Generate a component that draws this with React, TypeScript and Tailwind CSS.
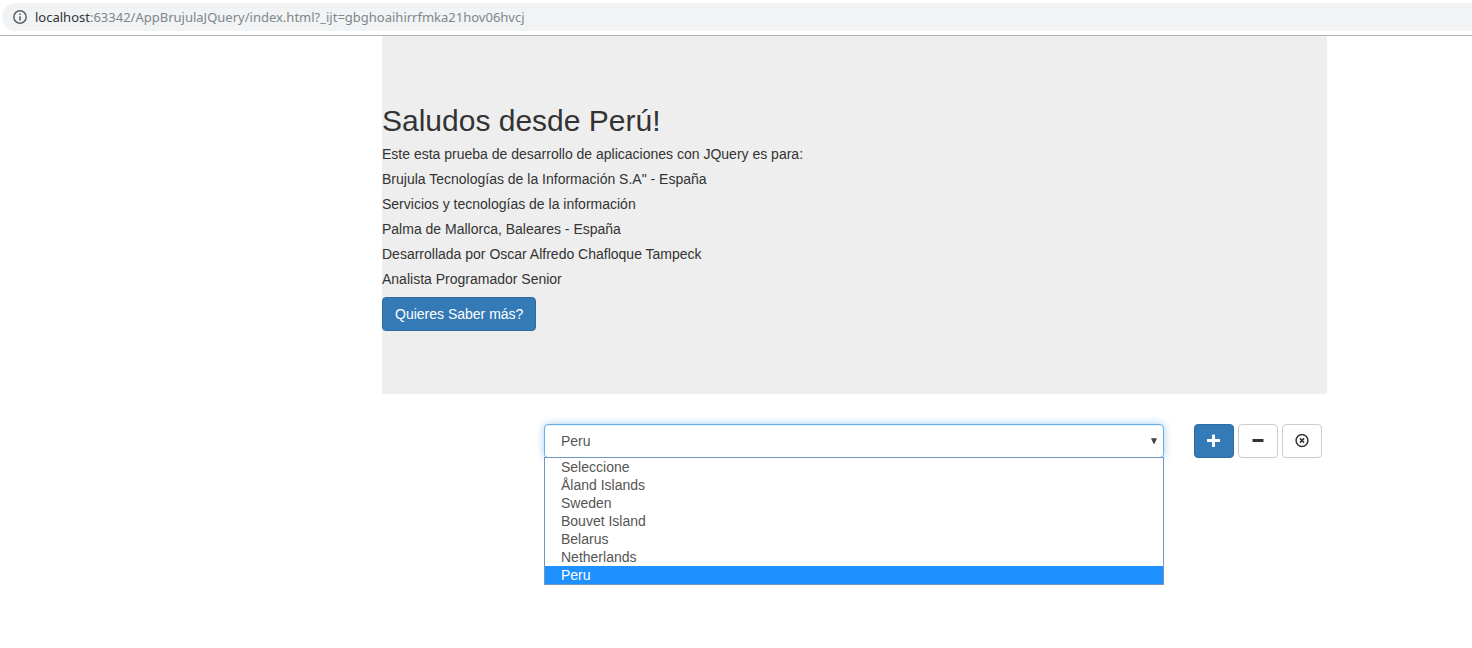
import { useState } from "react";

const countries = [
  "Seleccione",
  "Åland Islands",
  "Sweden",
  "Bouvet Island",
  "Belarus",
  "Netherlands",
  "Peru",
];

const lines = [
  "Este esta prueba de desarrollo de aplicaciones con JQuery es para:",
  'Brujula Tecnologías de la Información S.A" - España',
  "Servicios y tecnologías de la información",
  "Palma de Mallorca, Baleares - España",
  "Desarrollada por Oscar Alfredo Chafloque Tampeck",
  "Analista Programador Senior",
];

function AddressBar() {
  return (
    <header className="border-b border-[#b1b1b1] bg-white pt-[3px] pb-1 pl-0.5">
      <div className="flex h-7 items-center gap-2 rounded-l-full bg-[#f1f3f4] pl-[11px] font-['Noto_Sans','Open_Sans',sans-serif] text-[13px]">
        <svg viewBox="0 0 14 14" className="size-3.5 shrink-0" fill="none" aria-hidden="true">
          <circle cx="7" cy="7" r="6.2" stroke="#5f6368" strokeWidth="1.5" />
          <path d="M6.2 6.2h1.6v4.3H6.2zM6.2 3.5h1.6v1.6H6.2z" fill="#5f6368" />
        </svg>
        <span className="whitespace-nowrap text-[#80868b]">
          <span className="text-[#303336]">localhost</span>
          :63342/AppBrujulaJQuery/index.html?_ijt=gbghoaihirrfmka21hov06hvcj
        </span>
      </div>
    </header>
  );
}

function CountryPicker() {
  const [selected, setSelected] = useState("Peru");
  const [open, setOpen] = useState(true);

  return (
    <div className="relative min-w-0 flex-1 text-[#555555]">
      <select
        aria-label="País"
        value={selected}
        onChange={(e) => setSelected(e.target.value)}
        onMouseDown={(e) => {
          e.preventDefault();
          setOpen(!open);
        }}
        className="block h-[34px] w-full appearance-none rounded border border-[#66afe9] bg-white px-4 shadow-[inset_0_1px_1px_rgba(0,0,0,0.075),0_0_8px_rgba(102,175,233,0.6)] outline-none"
      >
        {countries.map((c) => (
          <option key={c}>{c}</option>
        ))}
      </select>
      <svg
        viewBox="0 0 6 6"
        className="pointer-events-none absolute top-3.5 right-[7px] size-1.5"
        aria-hidden="true"
      >
        <path d="M0 .3h6L3.500 5.700h-1z" fill="#444444" />
      </svg>
      {open && (
        <ul
          role="listbox"
          aria-label="Países"
          className="absolute inset-x-0 top-[33px] border border-[#7096bd] bg-white"
        >
          {countries.map((c) => (
            <li
              key={c}
              role="option"
              aria-selected={c === selected}
              onClick={() => {
                setSelected(c);
                setOpen(false);
              }}
              className={
                c === selected
                  ? "h-[18px] cursor-default bg-[#1e90ff] px-4 leading-[18px] text-white"
                  : "h-[18px] cursor-default px-4 leading-[18px]"
              }
            >
              {c}
            </li>
          ))}
        </ul>
      )}
    </div>
  );
}

function Actions() {
  return (
    <div className="flex shrink-0 gap-1">
      <button
        aria-label="Agregar"
        className="flex h-[34px] w-10 items-center justify-center rounded border border-[#2e6da4] bg-[#337ab7] text-white"
      >
        <svg viewBox="0 0 14 14" className="size-3.5" fill="currentColor" aria-hidden="true">
          <path d="M5 .8q0-.4.400-.4h2.200q.4 0 .4.400V5h4.600q.4 0 .4.400v2.200q0 .4-.4.400H8v4.600q0 .4-.4.400H5.400q-.4 0-.4-.4V8H.400q-.4 0-.4-.4V5.400Q0 5 .400 5H5z" />
        </svg>
      </button>
      <button
        aria-label="Quitar"
        className="flex h-[34px] w-10 items-center justify-center rounded border border-[#cccccc] bg-white text-[#333333]"
      >
        <svg viewBox="0 0 14 14" className="size-3.5" fill="currentColor" aria-hidden="true">
          <rect x="1.500" y="5" width="11" height="3" rx=".4" />
        </svg>
      </button>
      <button
        aria-label="Limpiar"
        className="flex h-[34px] w-10 items-center justify-center rounded border border-[#cccccc] bg-white text-[#333333]"
      >
        <svg viewBox="0 0 14 14" className="size-3.5" fill="none" stroke="currentColor" aria-hidden="true">
          <circle cx="7" cy="6.500" r="5.900" strokeWidth="1.500" />
          <path d="M4.900 4.400l4.200 4.200M9.100 4.400L4.900 8.600" strokeWidth="1.500" />
        </svg>
      </button>
    </div>
  );
}

export default function App() {
  return (
    <div className="min-h-screen bg-white font-['Liberation_Sans',Arial,sans-serif] text-sm text-[#333333]">
      <AddressBar />
      <main className="mr-[145px] ml-[382px]">
        <section className="bg-[#eeeeee] pt-[68px] pb-[63px]">
          <h1 className="mb-[7px] text-[30px] leading-[33px]">Saludos desde Perú!</h1>
          <div className="mb-2 flex flex-col gap-[5px] leading-5">
            {lines.map((l) => (
              <p key={l}>{l}</p>
            ))}
          </div>
          <button className="h-[34px] rounded border border-[#2e6da4] bg-[#337ab7] px-3 text-white">
            Quieres Saber más?
          </button>
        </section>
        <section className="mt-[30px] flex gap-[30px] pr-[5px] pl-[162px]">
          <CountryPicker />
          <Actions />
        </section>
      </main>
    </div>
  );
}
